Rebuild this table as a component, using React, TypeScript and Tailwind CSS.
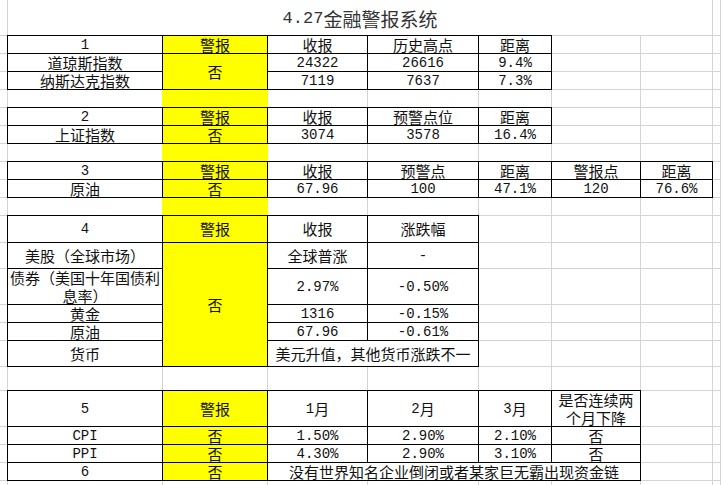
type Cell = {
  t?: string;
  box?: boolean;
  y?: boolean;
  cs?: number;
  rs?: number;
  title?: boolean;
};

const colSpan: Record<number, string> = {
  1: "",
  2: "col-span-2",
  4: "col-span-4",
  7: "col-span-7",
};

const rowSpan: Record<number, string> = {
  1: "",
  2: "row-span-2",
  5: "row-span-5",
};

const E: Cell = {};
const b = (t: string, extra: Partial<Cell> = {}): Cell => ({ t, box: true, ...extra });
const by = (t: string, extra: Partial<Cell> = {}): Cell => ({ t, box: true, y: true, ...extra });

const gapYellow: Cell[] = [E, E, { y: true }, E, E, E, E, E, E];
const gapWhite: Cell[] = [E, E, E, E, E, E, E, E, E];

// one entry per sheet row; first cell is the row gutter, last one is column H
const rows: Cell[][] = [
  [E, { t: "4.27金融警报系统", cs: 7, title: true }, E],
  [E, b("1"), by("警报"), b("收报"), b("历史高点"), b("距离"), E, E, E],
  [E, b("道琼斯指数"), by("否", { rs: 2 }), b("24322"), b("26616"), b("9.4%"), E, E, E],
  [E, b("纳斯达克指数"), b("7119"), b("7637"), b("7.3%"), E, E, E],
  gapYellow,
  [E, b("2"), by("警报"), b("收报"), b("预警点位"), b("距离"), E, E, E],
  [E, b("上证指数"), by("否"), b("3074"), b("3578"), b("16.4%"), E, E, E],
  gapYellow,
  [E, b("3"), by("警报"), b("收报"), b("预警点"), b("距离"), b("警报点"), b("距离"), E],
  [E, b("原油"), by("否"), b("67.96"), b("100"), b("47.1%"), b("120"), b("76.6%"), E],
  gapYellow,
  [E, b("4"), by("警报"), b("收报"), b("涨跌幅"), E, E, E, E],
  [E, b("美股（全球市场）"), by("否", { rs: 5 }), b("全球普涨"), b("-"), E, E, E, E],
  [E, b("债券（美国十年国债利\n息率）"), b("2.97%"), b("-0.50%"), E, E, E, E],
  [E, b("黄金"), b("1316"), b("-0.15%"), E, E, E, E],
  [E, b("原油"), b("67.96"), b("-0.61%"), E, E, E, E],
  [E, b("货币"), b("美元升值，其他货币涨跌不一", { cs: 2 }), E, E, E, E],
  gapWhite,
  [E, b("5"), by("警报"), b("1月"), b("2月"), b("3月"), b("是否连续两\n个月下降"), E, E],
  [E, b("CPI"), by("否"), b("1.50%"), b("2.90%"), b("2.10%"), b("否"), E, E],
  [E, b("PPI"), by("否"), b("4.30%"), b("2.90%"), b("3.10%"), b("否"), E, E],
  [E, b("6"), by("否"), b("没有世界知名企业倒闭或者某家巨无霸出现资金链", { cs: 4 }), E, E],
  gapWhite,
];

// ascii runs get the half-width mono face, like the sheet's SimSun digits
function Txt({ s, big }: { s: string; big?: boolean }) {
  return (
    <>
      {s.split("\n").map((line, i) => (
        <span key={i} className="block">
          {line
            .split(/([\x20-\x7e]+)/)
            .filter(Boolean)
            .map((p, j) =>
              /^[\x20-\x7e]+$/.test(p) ? (
                <span
                  key={j}
                  className={
                    big
                      ? "inline-block align-top font-['Liberation_Mono',monospace] text-[17px]"
                      : "inline-block align-top font-['Liberation_Mono',monospace] text-[14px]"
                  }
                >
                  {p}
                </span>
              ) : (
                <span key={j} className="inline-block align-top">
                  {p}
                </span>
              )
            )}
        </span>
      ))}
    </>
  );
}

function SheetCell({ c }: { c: Cell }) {
  let cls =
    "flex flex-col items-center justify-center overflow-hidden whitespace-nowrap text-center leading-[18px] ";
  if (c.box) cls += "relative z-10 -mt-px -ml-px border border-black";
  else if (c.y) cls += "relative z-10 -ml-px border-r border-b border-transparent";
  else cls += "border-r border-b border-[#d4d4d4]";
  if (c.y) cls += " bg-[#ffff00]";
  cls += " " + colSpan[c.cs ?? 1] + " " + rowSpan[c.rs ?? 1];
  if (c.title) cls += " pt-[3px] text-[19px] leading-[22px] text-[#333]";

  return <div className={cls}>{c.t && <Txt s={c.t} big={c.title} />}</div>;
}

export default function App() {
  return (
    <div className="h-[485px] w-full overflow-hidden bg-white font-['Noto_Sans_CJK_SC',sans-serif] text-[15px] text-[#111]">
      <div className="grid grid-cols-[8px_155px_105px_100px_111px_73px_89px_72px_1fr] grid-rows-[36px_18px_18px_18px_18px_18px_18px_18px_18px_18px_18px_27px_26px_36px_18px_18px_26px_24px_36px_18px_18px_18px_18px]">
        {rows.map((row, ri) => row.map((c, ci) => <SheetCell key={ri + "-" + ci} c={c} />))}
      </div>
    </div>
  );
}
